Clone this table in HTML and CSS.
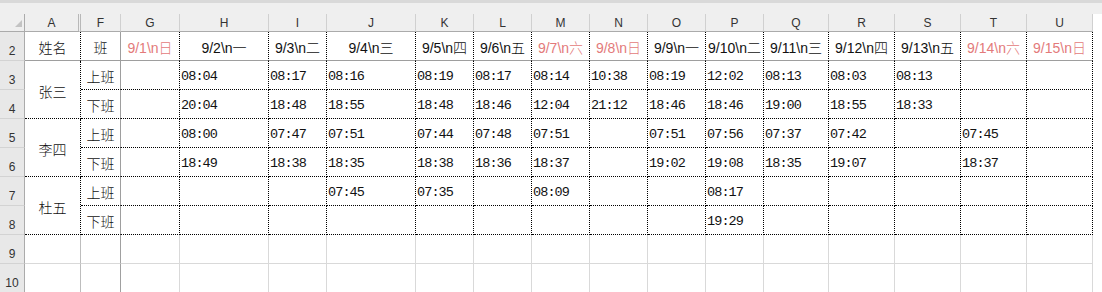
FILE: index.html
```html
<!DOCTYPE html>
<html lang="zh">
<head>
<meta charset="utf-8">
<title>考勤表</title>
<link rel="stylesheet" href="styles.css">
</head>
<body>
<div class="topbar"></div>
<div class="sheet">
  <div class="corner"><span class="tri"></span></div>
  <div class="ch hid">A</div><div class="ch">F</div><div class="ch">G</div><div class="ch">H</div><div class="ch">I</div><div class="ch">J</div><div class="ch">K</div><div class="ch">L</div><div class="ch">M</div><div class="ch">N</div><div class="ch">O</div><div class="ch">P</div><div class="ch">Q</div><div class="ch">R</div><div class="ch">S</div><div class="ch">T</div><div class="ch">U</div>

  <div class="rh">2</div>
  <div class="c r2 ctr">姓名</div><div class="c r2 fz ctr">班</div>
  <div class="c r2 ctr red">9/1\n日</div><div class="c r2 ctr">9/2\n一</div><div class="c r2 ctr">9/3\n二</div><div class="c r2 ctr">9/4\n三</div><div class="c r2 ctr">9/5\n四</div><div class="c r2 ctr">9/6\n五</div><div class="c r2 ctr red">9/7\n六</div><div class="c r2 ctr red">9/8\n日</div><div class="c r2 ctr">9/9\n一</div><div class="c r2 ctr">9/10\n二</div><div class="c r2 ctr">9/11\n三</div><div class="c r2 ctr">9/12\n四</div><div class="c r2 ctr">9/13\n五</div><div class="c r2 ctr red">9/14\n六</div><div class="c r2 ctr red">9/15\n日</div>

  <div class="rh">3</div>
  <div class="c nm">张三</div><div class="c fz ctr">上班</div>
  <div class="c t"></div><div class="c t">08:04</div><div class="c t">08:17</div><div class="c t">08:16</div><div class="c t">08:19</div><div class="c t">08:17</div><div class="c t">08:14</div><div class="c t">10:38</div><div class="c t">08:19</div><div class="c t">12:02</div><div class="c t">08:13</div><div class="c t">08:03</div><div class="c t">08:13</div><div class="c t"></div><div class="c t"></div>

  <div class="rh">4</div>
  <div class="c fz ctr">下班</div>
  <div class="c t"></div><div class="c t">20:04</div><div class="c t">18:48</div><div class="c t">18:55</div><div class="c t">18:48</div><div class="c t">18:46</div><div class="c t">12:04</div><div class="c t">21:12</div><div class="c t">18:46</div><div class="c t">18:46</div><div class="c t">19:00</div><div class="c t">18:55</div><div class="c t">18:33</div><div class="c t"></div><div class="c t"></div>

  <div class="rh">5</div>
  <div class="c nm">李四</div><div class="c fz ctr">上班</div>
  <div class="c t"></div><div class="c t">08:00</div><div class="c t">07:47</div><div class="c t">07:51</div><div class="c t">07:44</div><div class="c t">07:48</div><div class="c t">07:51</div><div class="c t"></div><div class="c t">07:51</div><div class="c t">07:56</div><div class="c t">07:37</div><div class="c t">07:42</div><div class="c t"></div><div class="c t">07:45</div><div class="c t"></div>

  <div class="rh">6</div>
  <div class="c fz ctr">下班</div>
  <div class="c t"></div><div class="c t">18:49</div><div class="c t">18:38</div><div class="c t">18:35</div><div class="c t">18:38</div><div class="c t">18:36</div><div class="c t">18:37</div><div class="c t"></div><div class="c t">19:02</div><div class="c t">19:08</div><div class="c t">18:35</div><div class="c t">19:07</div><div class="c t"></div><div class="c t">18:37</div><div class="c t"></div>

  <div class="rh">7</div>
  <div class="c nm">杜五</div><div class="c fz ctr">上班</div>
  <div class="c t"></div><div class="c t"></div><div class="c t"></div><div class="c t">07:45</div><div class="c t">07:35</div><div class="c t"></div><div class="c t">08:09</div><div class="c t"></div><div class="c t"></div><div class="c t">08:17</div><div class="c t"></div><div class="c t"></div><div class="c t"></div><div class="c t"></div><div class="c t"></div>

  <div class="rh">8</div>
  <div class="c fz ctr">下班</div>
  <div class="c t"></div><div class="c t"></div><div class="c t"></div><div class="c t"></div><div class="c t"></div><div class="c t"></div><div class="c t"></div><div class="c t"></div><div class="c t"></div><div class="c t">19:29</div><div class="c t"></div><div class="c t"></div><div class="c t"></div><div class="c t"></div><div class="c t"></div>

  <div class="rh">9</div>
  <div class="e ea"></div><div class="e efz"></div><div class="e"></div><div class="e"></div><div class="e"></div><div class="e"></div><div class="e"></div><div class="e"></div><div class="e"></div><div class="e"></div><div class="e"></div><div class="e"></div><div class="e"></div><div class="e"></div><div class="e"></div><div class="e"></div><div class="e"></div>

  <div class="rh">10</div>
  <div class="e ea"></div><div class="e efz"></div><div class="e"></div><div class="e"></div><div class="e"></div><div class="e"></div><div class="e"></div><div class="e"></div><div class="e"></div><div class="e"></div><div class="e"></div><div class="e"></div><div class="e"></div><div class="e"></div><div class="e"></div><div class="e"></div><div class="e"></div>
</div>
</body>
</html>
```

FILE: styles.css
```css
* {
  box-sizing: border-box;
  margin: 0;
  padding: 0;
}

html, body {
  background: #ffffff;
}

body {
  width: 1102px;
  height: 292px;
  overflow: hidden;
  font-family: "Liberation Sans", "Noto Sans CJK SC", sans-serif;
}

.topbar {
  height: 14px;
  background: #efefef;
  border-top: 3px solid #d9d9d9;
}

.sheet {
  display: grid;
  grid-template-columns: 25px 56px 40px 59px 89px 58px 89px 58px 58px 58px 58px 58px 58px 65px 66px 66px 66px 66px;
  grid-template-rows: 18px repeat(9, 29px);
}

.corner {
  background: #efefef;
  border-right: 1px solid #ababab;
  border-bottom: 1px solid #ababab;
  display: flex;
  justify-content: flex-end;
  align-items: flex-end;
  padding: 0 2px 4px 0;
}

.tri {
  display: block;
  width: 7px;
  height: 7px;
  background: #c3c3c3;
  clip-path: polygon(100% 0, 100% 100%, 0 100%);
}

.ch {
  background: #efefef;
  border-right: 1px solid #d0d0d0;
  border-bottom: 1px solid #ababab;
  font-size: 12px;
  color: #333333;
  display: flex;
  align-items: center;
  justify-content: center;
}

.ch.hid {
  border-right: 3px double #b8b8b8;
}

.rh {
  background: #e8e8e8;
  border-right: 1px solid #ababab;
  border-bottom: 1px solid #d3d3d3;
  font-size: 12px;
  color: #333333;
  display: flex;
  align-items: flex-end;
  justify-content: center;
  padding-bottom: 2px;
}

.c {
  border-right: 1px dotted #000000;
  border-bottom: 1px dotted #000000;
  font-size: 14px;
  font-weight: 300;
  color: #111111;
  display: flex;
  align-items: center;
  padding-top: 2px;
  white-space: nowrap;
}

.ctr {
  justify-content: center;
}

.nm {
  grid-row: span 2;
  justify-content: center;
}

.r2 {
  border-bottom: 1px solid #9e9e9e;
}

.fz {
  border-right: 1px solid #9e9e9e;
}

.red {
  color: #e37a7a;
}

.t {
  font-family: "Liberation Mono", monospace;
  font-size: 13.5px;
  font-weight: 400;
  letter-spacing: -0.9px;
  padding-left: 1px;
}

.e {
  border-right: 1px solid #d9d9d9;
  border-bottom: 1px solid #d9d9d9;
}

.e.ea {
  border-right-color: #bdbdbd;
}

.e.efz {
  border-right-color: #a0a0a0;
}
```
